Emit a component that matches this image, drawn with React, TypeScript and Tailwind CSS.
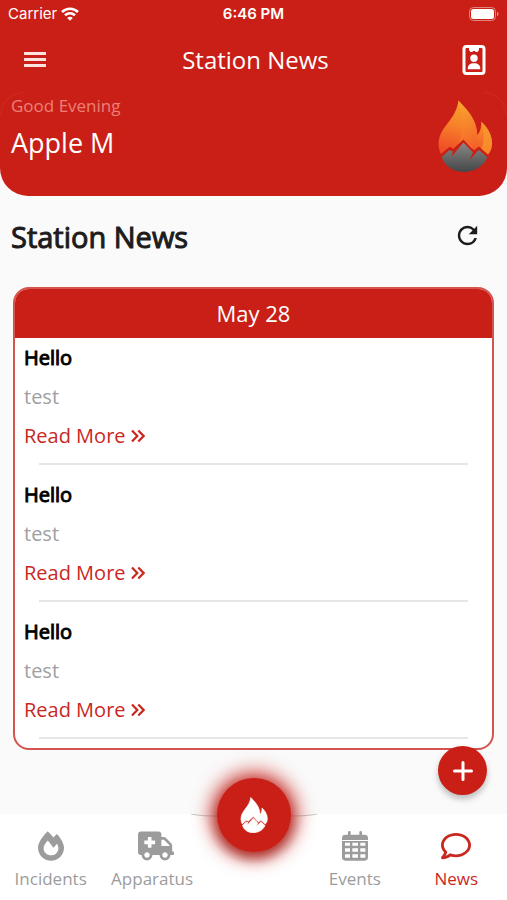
import React, { useState } from "react"
import { FaAmbulance, FaFireAlt, FaRegComment } from "react-icons/fa"
import { MdRefresh } from "react-icons/md"

const FLAME =
  "M65 3 C85 25 122 58 122 108 C132 98 135 84 134 68 C155 85 169 112 167 138 C166 152 160 160 155 167 L127 143 L113 154 L105 148 L80 121 L50 150 L38 144 L12 166 C-5 130 10 100 30 75 C50 50 62 30 65 3 Z"
const ROCK =
  "M14 175 L37 154 L48 157 L44 174 L80 131 L109 160 L99 184 L127 153 L153 176 C140 205 110 220 80 220 C50 220 25 205 14 175 Z"

const news = [
  { id: 1, title: "Hello", body: "test" },
  { id: 2, title: "Hello", body: "test" },
  { id: 3, title: "Hello", body: "test" },
]

const Logo = () => (
  <svg viewBox="0 0 170 222" className="h-[74px] w-14" role="img" aria-label="Station logo">
    <defs>
      <linearGradient id="flame" x1="0.6" y1="0" x2="0.35" y2="1">
        <stop offset="0" stopColor="#f9a62b" />
        <stop offset="0.5" stopColor="#f7812a" />
        <stop offset="1" stopColor="#f04a26" />
      </linearGradient>
      <linearGradient id="flameInner" x1="0.3" y1="0" x2="0.5" y2="1">
        <stop offset="0" stopColor="#fba52d" />
        <stop offset="1" stopColor="#f4662a" />
      </linearGradient>
      <linearGradient id="rock" x1="0.5" y1="0" x2="0.5" y2="1">
        <stop offset="0" stopColor="#8a8886" />
        <stop offset="1" stopColor="#454748" />
      </linearGradient>
    </defs>
    <path d={FLAME} fill="url(#flame)" />
    <path
      d="M65 3 C85 25 122 58 122 108 C122 125 115 138 105 148 L80 121 L64 136 C86 100 78 50 65 3 Z"
      fill="url(#flameInner)"
    />
    <path d="M134 68 C155 85 169 112 167 138 C166 152 160 160 155 167 L135 150 C146 125 142 95 134 68 Z" fill="#f99a2c" opacity="0.7" />
    <path d={ROCK} fill="url(#rock)" />
  </svg>
)

const MenuIcon = () => (
  <svg viewBox="0 0 28 28" className="size-7" fill="#ffe3e0" aria-hidden="true">
    <rect x="3" y="6" width="22" height="3" />
    <rect x="3" y="12" width="22" height="3" />
    <rect x="3" y="18" width="22" height="3" />
  </svg>
)

const BadgeIcon = () => (
  <svg viewBox="0 0 24 30" className="h-[30px] w-6" fill="none" aria-hidden="true">
    <rect x="2" y="1.5" width="20" height="27" rx="2.5" stroke="white" strokeWidth="3" />
    <path d="M7 2 H17 V5 L15.500 7 H13.500 L13 6 H11 L10.500 7 H8.500 L7 5 Z" fill="white" />
    <circle cx="12" cy="13.300" r="3.700" fill="white" />
    <path d="M5.800 24.300 C5.500 20 8 18.300 12 18.300 C16 18.300 18.500 20 18.200 24.300 Z" fill="white" />
  </svg>
)

const CalendarIcon = ({ className }: { className?: string }) => (
  <svg viewBox="0 0 78 88" className={className} fill="currentColor" aria-hidden="true">
    <path d="M18 3 a4 4 0 0 1 8 0 V10 H52 V3 a4 4 0 0 1 8 0 V10 H68 a10 10 0 0 1 10 10 V26 H0 V20 a10 10 0 0 1 10 -10 H18 Z" />
    <path
      fillRule="evenodd"
      d="M0 29 H78 V78 a10 10 0 0 1 -10 10 H10 a10 10 0 0 1 -10 -10 Z M9 34 v9 h15 v-9 Z M31 34 v9 h17 v-9 Z M55 34 v9 h15 v-9 Z M9 51 v10 h15 v-10 Z M31 51 v10 h17 v-10 Z M55 51 v10 h15 v-10 Z M9 69 v10 h15 v-10 Z M31 69 v10 h17 v-10 Z M55 69 v10 h15 v-10 Z"
    />
  </svg>
)

const StatusBar = () => (
  <div className="grid h-7 grid-cols-3 items-center px-2 font-['Inter',sans-serif] text-[15px] text-white">
    <div className="flex items-center gap-1">
      <span>Carrier</span>
      <svg viewBox="0 0 18 14" className="h-[14px] w-[18px]" fill="none" stroke="white" strokeWidth="2.6" aria-hidden="true">
        <path d="M1 5 C5.500 0.700 12.500 0.700 17 5" />
        <path d="M4 8.300 C7 5.600 11 5.600 14 8.300" />
        <path d="M9 13.800 L6.200 10.900 C7.800 9.400 10.200 9.400 11.800 10.900 Z" fill="white" stroke="none" />
      </svg>
    </div>
    <span className="text-center font-semibold">6:46 PM</span>
    <svg viewBox="0 0 30 14" className="h-[14px] w-[30px] justify-self-end" aria-hidden="true">
      <rect x="0.5" y="0.5" width="26" height="13" rx="4" fill="none" stroke="white" strokeOpacity="0.45" />
      <rect x="2" y="2" width="23" height="10" rx="2.5" fill="white" />
      <path d="M28 5 C30 5.500 30 8.500 28 9 Z" fill="white" fillOpacity="0.5" />
    </svg>
  </div>
)

const Header = () => (
  <header className="rounded-b-[28px] bg-[#ca1f16] text-white">
    <StatusBar />
    <div className="flex h-16 items-center justify-between px-[21px]">
      <button type="button" aria-label="Menu">
        <MenuIcon />
      </button>
      <h1 className="text-2xl">Station News</h1>
      <button type="button" aria-label="Profile">
        <BadgeIcon />
      </button>
    </div>
    <div className="relative flex h-[104px] justify-between pl-[11px] pr-[14px]">
      <span className="absolute left-0 top-0 size-6 rounded-tl-3xl border-l border-t border-white/5" />
      <span className="absolute right-0 top-0 size-6 rounded-tr-3xl border-r border-t border-white/5" />
      <div>
        <p className="text-[17px] leading-7 text-[#ec8079]">Good Evening</p>
        <p className="text-[27px] leading-[46px]">Apple M</p>
      </div>
      <div className="pt-[7px]">
        <Logo />
      </div>
    </div>
  </header>
)

const NewsItem = ({ title, body }: { title: string; body: string }) => (
  <article className="pb-[10px] text-[20px] leading-[39px]">
    <div className="px-[9px]">
      <h3 className="text-black [-webkit-text-stroke:1px]">{title}</h3>
      <p className="text-[#a0a0a0]">{body}</p>
      <a href="#" className="flex items-center gap-[5px] text-[#c9281f]">
        Read More
        <svg viewBox="0 0 14 14" className="size-[14px]" fill="none" stroke="currentColor" strokeWidth="2.2" aria-hidden="true">
          <path d="M1 1.500 L6.300 7 L1 12.500 M7.300 1.500 L12.600 7 L7.300 12.500" />
        </svg>
      </a>
    </div>
    <hr className="mx-6 mt-2 border-t-2 border-[#e6e6e6]" />
  </article>
)

const tabs = [
  { name: "Incidents", icon: FaFireAlt, size: "h-[30px] w-[26px]" },
  { name: "Apparatus", icon: FaAmbulance, size: "h-[30px] w-11 pl-2" },
  null,
  { name: "Events", icon: CalendarIcon, size: "h-[30px] w-[26px]" },
  { name: "News", icon: FaRegComment, size: "size-[30px]" },
]

const TabBar = () => {
  const [active, setActive] = useState("News")
  return (
    <nav className="relative grid h-[86px] shrink-0 grid-cols-5 bg-white">
      {tabs.map((tab) =>
        tab ? (
          <button
            key={tab.name}
            type="button"
            onClick={() => setActive(tab.name)}
            className={`flex flex-col items-center pt-[17px] text-[17px] leading-6 ${
              active === tab.name ? "text-[#c9281f]" : "text-[#9c9c9c]"
            }`}
          >
            <tab.icon className={tab.size} />
            <span className="mt-[6px]">{tab.name}</span>
          </button>
        ) : (
          <span key="gap" />
        )
      )}
      <svg viewBox="0 0 126 56" className="absolute left-1/2 top-0 h-14 w-[126px] -translate-x-1/2" aria-hidden="true">
        <path d="M0 0 C12 1 14 4 17 12 C25 62 101 62 109 12 C112 4 114 1 126 0 Z" fill="#fafafa" />
        <path d="M0 0 C10 2 18 2 30 2 M126 0 C116 2 108 2 96 2" fill="none" stroke="#c4c4c4" />
      </svg>
      <button
        type="button"
        aria-label="Home"
        className="absolute -top-9 left-1/2 flex size-[74px] -translate-x-1/2 items-center justify-center rounded-full bg-[#ca1f16] shadow-[0_0_18px_7px_#ca1f16c0,0_4px_12px_#5a0a06c0]"
      >
        <svg viewBox="0 0 170 222" className="h-9 w-7" fill="white" stroke="white" strokeWidth="4" aria-hidden="true">
          <path d={FLAME} />
          <path d={ROCK} />
        </svg>
      </button>
    </nav>
  )
}

const App = () => {
  return (
    <div className="flex h-screen flex-col bg-[#fafafa] font-['Open_Sans',sans-serif]">
      <Header />
      <main className="relative flex min-h-0 flex-1 flex-col px-[13px] pb-[64px]">
        <div className="flex h-[91px] items-center justify-between pb-[10px] pr-3">
          <h2 className="-ml-[2px] text-[29px] text-[#1c1c1c] [-webkit-text-stroke:1px]">Station News</h2>
          <button type="button" aria-label="Refresh" className="pb-[3px]">
            <MdRefresh className="size-[29px] text-[#1c1c1c]" />
          </button>
        </div>
        <section className="min-h-0 flex-1 overflow-hidden rounded-2xl border-2 border-[#d4554f] bg-white">
          <h2 className="bg-[#ca1f16] text-center text-[22px] leading-[49px] text-white">May 28</h2>
          {news.map((item) => (
            <NewsItem key={item.id} title={item.title} body={item.body} />
          ))}
        </section>
        <button
          type="button"
          aria-label="Add news"
          className="absolute bottom-[19px] right-5 flex size-[49px] items-center justify-center rounded-full bg-[#ca1f16] shadow-[0_4px_6px_#00000040]"
        >
          <svg viewBox="0 0 20 20" className="size-5" stroke="white" strokeWidth="3" strokeLinecap="round" aria-hidden="true">
            <path d="M10 1.500 V18.500 M1.500 10 H18.500" />
          </svg>
        </button>
      </main>
      <TabBar />
    </div>
  )
}

export default App
